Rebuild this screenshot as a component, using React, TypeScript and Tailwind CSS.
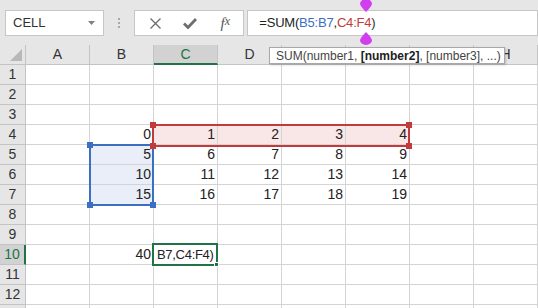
import React from "react";

const cols = ["A", "B", "C", "D", "E", "F", "G", "H"];
const data: Record<string, string> = {
  B4: "0", C4: "1", D4: "2", E4: "3", F4: "4",
  B5: "5", C5: "6", D5: "7", E5: "8", F5: "9",
  B6: "10", C6: "11", D6: "12", E6: "13", F6: "14",
  B7: "15", C7: "16", D7: "17", E7: "18", F7: "19",
  B10: "40",
};

function cellBg(c: string, r: number) {
  if (c === "B" && r >= 5 && r <= 7) return "bg-[#e9eef8]";
  if (r === 4 && ["C", "D", "E", "F"].includes(c)) return "bg-[#f9e7e7]";
  return "bg-white";
}

function Handle({ cls, color }: { cls: string; color: string }) {
  return <div className={`absolute w-[6px] h-[6px] ${color} ${cls}`} />;
}

export default function App() {
  const rows = Array.from({ length: 13 }, (_, i) => i + 1);
  return (
    <div className="w-[538px] h-[308px] overflow-hidden bg-white relative font-['Liberation_Sans',sans-serif] text-[#222]">
      {/* toolbar */}
      <div className="h-[45px] bg-[#e6e6e6] flex items-start pt-[10px] pl-[5px]">
        <div className="w-[102px] h-[26px] bg-white border border-[#c6c6c6] flex items-center pl-[7px] pr-[8px] text-[13px] text-[#333]">
          <span className="flex-1">CELL</span>
          <svg width="7" height="4" viewBox="0 0 7 4"><path d="M0 0 L7 0 L3.5 4 Z" fill="#808080" /></svg>
        </div>
        <div className="w-[31px] h-[26px] flex flex-col items-center justify-center gap-[2px]">
          <div className="w-[2px] h-[2px] bg-[#a8a8a8]" />
          <div className="w-[2px] h-[2px] bg-[#a8a8a8]" />
          <div className="w-[2px] h-[2px] bg-[#a8a8a8]" />
        </div>
        <div className="w-[110px] h-[26px] bg-white border border-[#c6c6c6] flex items-center">
          <div className="w-[38px] flex justify-center pl-[2px]">
            <svg width="11" height="11" viewBox="0 0 11 11"><path d="M0.5 0.5 L10.5 10.5 M10.5 0.5 L0.5 10.5" stroke="#6e6e6e" strokeWidth="1.4" /></svg>
          </div>
          <div className="w-[34px] flex justify-center">
            <svg width="14" height="11" viewBox="0 0 14 11"><path d="M1 5.5 L5 9.5 L13 1" stroke="#6e6e6e" strokeWidth="2.8" fill="none" /></svg>
          </div>
          <div className="w-[36px] flex justify-center font-['Liberation_Serif',serif] italic text-[15px] text-[#555]">
            f<span className="text-[12px]">x</span>
          </div>
        </div>
        <div className="ml-[3px] w-[300px] h-[26px] bg-white border border-[#c6c6c6] flex items-center pl-[11px] text-[13px] tracking-[-0.2px]">
          <span>=SUM(</span>
          <span className="text-[#3b6fc2]">B5:B7</span>
          <span>,</span>
          <span className="text-[#c23a3a]">C4:F4</span>
          <span className="text-[#333]">)</span>
        </div>
      </div>

      {/* grid */}
      <div className="relative">
        <div className="flex h-[20px]">
          <div className="w-[26px] h-[20px] bg-[#e6e6e6] border-r border-b border-[#c4c4c4] relative">
            <svg className="absolute right-[3px] bottom-[3px]" width="12" height="12" viewBox="0 0 12 12"><path d="M12 0 L12 12 L0 12 Z" fill="#b8b8b8" /></svg>
          </div>
          {cols.map((c) => (
            <div
              key={c}
              className={`w-[64px] h-[20px] border-r flex items-center justify-center text-[14px] ${
                c === "C"
                  ? "bg-[#d2d2d2] border-b-2 border-b-[#217346] border-r-[#c4c4c4] text-[#217346]"
                  : "bg-[#e6e6e6] border-b border-[#c4c4c4] text-[#333]"
              }`}
            >
              {["E", "F", "G"].includes(c) ? "" : c}
            </div>
          ))}
        </div>
        {rows.map((r) => (
          <div key={r} className="flex h-[20px]">
            <div
              className={`w-[26px] h-[20px] border-b flex items-center justify-center text-[14px] ${
                r === 10
                  ? "bg-[#d2d2d2] border-r-2 border-r-[#217346] border-b-[#c4c4c4] text-[#217346]"
                  : "bg-[#e6e6e6] border-r border-[#c4c4c4] text-[#333]"
              }`}
            >
              {r <= 12 ? r : ""}
            </div>
            {cols.map((c) => (
              <div
                key={c}
                className={`w-[64px] h-[20px] border-r border-b border-[#d4d4d4] flex items-end justify-end pr-[2px] pb-[2px] leading-[16px] text-[14px] ${cellBg(c, r)}`}
              >
                {data[c + r] ?? ""}
              </div>
            ))}
          </div>
        ))}

        {/* blue range B5:B7 */}
        <div className="absolute left-[89px] top-[99px] w-[65px] h-[62px] border-2 border-[#3b6fc2]">
          <Handle cls="-left-[4px] -top-[4px]" color="bg-[#3b6fc2]" />
          <Handle cls="-left-[4px] -bottom-[4px]" color="bg-[#3b6fc2]" />
          <Handle cls="-right-[4px] -bottom-[4px]" color="bg-[#3b6fc2]" />
        </div>
        {/* red range C4:F4 */}
        <div className="absolute left-[152px] top-[79px] w-[258px] h-[23px] border-2 border-[#c23a3a]">
          <Handle cls="-left-[4px] -top-[4px]" color="bg-[#c23a3a]" />
          <Handle cls="-left-[4px] -bottom-[4px]" color="bg-[#c23a3a]" />
          <Handle cls="-right-[4px] -top-[4px]" color="bg-[#c23a3a]" />
          <Handle cls="-right-[4px] -bottom-[4px]" color="bg-[#c23a3a]" />
        </div>
        {/* active cell C10 */}
        <div className="absolute left-[152px] top-[198px] w-[66px] h-[23px] border-2 border-[#217346] bg-white flex items-end pb-[1px] leading-[16px] pl-[3px] text-[13px] tracking-[-0.3px]">
          B7,C4:F4)
          <div className="absolute -right-[3px] -bottom-[3px] w-[5px] h-[5px] bg-[#217346] border border-white" />
        </div>
      </div>

      {/* tooltip */}
      <div className="absolute left-[269px] top-[47px] w-[236px] h-[17px] bg-white border border-[#a8a8a8] shadow-[1px_1px_2px_rgba(0,0,0,0.2)] flex items-center pl-[6px] text-[12px] text-[#444] whitespace-nowrap">
        SUM(number1,&nbsp;<b className="text-[#222]">[number2]</b>, [number3], ...)
      </div>

      {/* purple handles */}
      <svg className="absolute left-[359px] top-[0px]" width="14" height="12" viewBox="0 0 14 12">
        <path d="M1 4 A6 5 0 0 1 13 4 Q12 7 7 12 Q2 7 1 4 Z" fill="#d13ef0" />
      </svg>
      <svg className="absolute left-[359px] top-[32px]" width="14" height="13" viewBox="0 0 14 13">
        <path d="M7 0 Q12 5 13 8 A6 5 0 0 1 1 8 Q2 5 7 0 Z" fill="#d13ef0" />
      </svg>
    </div>
  );
}
